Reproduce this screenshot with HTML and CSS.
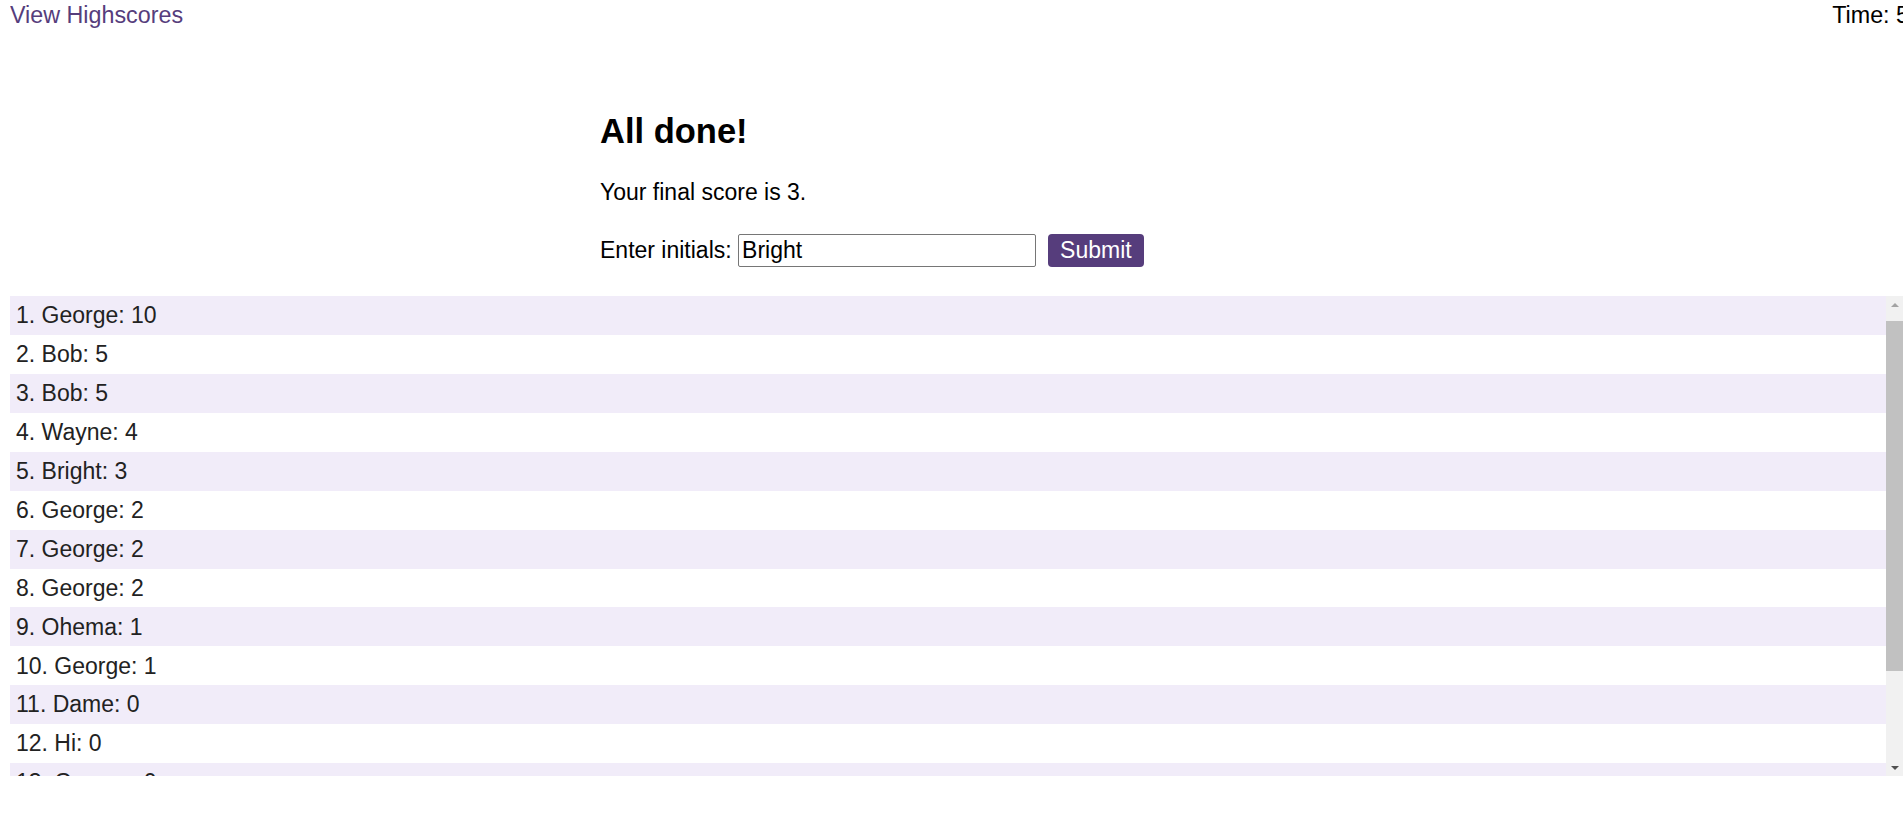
FILE: index.html
```html
<!DOCTYPE html>
<html lang="en">
<head>
<meta charset="utf-8">
<title>Code Quiz</title>
<link rel="stylesheet" href="styles.css">
</head>
<body>
<header class="topbar">
  <a class="highscores-link" href="#">View Highscores</a>
  <span class="timer">Time: 5</span>
</header>
<main class="quiz">
  <h2 class="done-title">All done!</h2>
  <p class="final-score">Your final score is 3.</p>
  <form class="initials-form">
    <label class="initials-label" for="initials">Enter initials: </label><input class="initials-input" id="initials" type="text" value="Bright"><button class="submit-btn" type="button">Submit</button>
  </form>
</main>
<div class="scores">
  <div class="scores-viewport">
    <ul class="score-list">
      <li class="score-row">1. George: 10</li>
      <li class="score-row">2. Bob: 5</li>
      <li class="score-row">3. Bob: 5</li>
      <li class="score-row">4. Wayne: 4</li>
      <li class="score-row">5. Bright: 3</li>
      <li class="score-row">6. George: 2</li>
      <li class="score-row">7. George: 2</li>
      <li class="score-row">8. George: 2</li>
      <li class="score-row">9. Ohema: 1</li>
      <li class="score-row">10. George: 1</li>
      <li class="score-row">11. Dame: 0</li>
      <li class="score-row">12. Hi: 0</li>
      <li class="score-row">13. George: 0</li>
      <li class="score-row">14. Bob: 0</li>
      <li class="score-row">15. Wayne: 0</li>
    </ul>
  </div>
  <div class="scrollbar" aria-hidden="true">
    <div class="scroll-btn">
      <svg width="8" height="4" viewBox="0 0 8 4"><path d="M0 4 L4 0 L8 4 Z" fill="#a3a3a3"/></svg>
    </div>
    <div class="scroll-track">
      <div class="scroll-thumb"></div>
    </div>
    <div class="scroll-btn">
      <svg width="8" height="4" viewBox="0 0 8 4"><path d="M0 0 L8 0 L4 4 Z" fill="#505050"/></svg>
    </div>
  </div>
</div>
</body>
</html>
```
FILE: styles.css
```css
html {
  overflow: hidden;
}

body {
  margin: 0 0 0 10px;
  font-family: "Liberation Sans", Arial, sans-serif;
  font-size: 23px;
  line-height: 26.4px;
  color: #000;
  background: #fff;
}

.topbar {
  display: flex;
  justify-content: space-between;
  padding-top: 2px;
  margin-right: -6px;
  font-size: 23.3px;
}

.highscores-link {
  color: #563d7c;
  text-decoration: none;
}

.timer {
  color: #000;
}

.quiz {
  width: 703px;
  margin: 0 auto;
  padding-right: 10px;
}

.done-title {
  font-size: 34.5px;
  line-height: 39.6px;
  font-weight: bold;
  margin: 84px 0 27px;
}

.final-score {
  margin: 0 0 28.75px;
}

.initials-form {
  margin: 0;
  white-space: nowrap;
}

.initials-label {
  color: #000;
}

.initials-input {
  font: inherit;
  line-height: 26.4px;
  color: #000;
  width: 298px;
  box-sizing: border-box;
  padding: 2px 3px;
  border: 1px solid #767676;
  border-radius: 2px;
  margin: 0 12px 0 0;
  background: #fff;
  vertical-align: baseline;
}

.submit-btn {
  font: inherit;
  line-height: 26.4px;
  color: #fff;
  background: #563d7c;
  border: none;
  border-radius: 4px;
  padding: 3px 12px;
  margin: 0;
}

.scores {
  display: flex;
  margin-top: 29.6px;
  height: 480px;
}

.scores-viewport {
  flex: 1;
  overflow: hidden;
}

.score-list {
  list-style: none;
  margin: 0;
  padding: 0;
  color: #222;
}

.score-row {
  padding: 6.25px 5px 6.25px 6px;
}

.score-row:nth-child(odd) {
  background: #f1ecf9;
}

.scrollbar {
  width: 17px;
  flex: none;
  display: flex;
  flex-direction: column;
  background: #f1f1f1;
}

.scroll-btn {
  height: 17px;
  flex: none;
  display: flex;
  align-items: center;
  justify-content: center;
}

.scroll-btn svg {
  display: block;
}

.scroll-track {
  flex: 1;
  padding-top: 8px;
}

.scroll-thumb {
  height: 350px;
  background: #c1c1c1;
}
```
